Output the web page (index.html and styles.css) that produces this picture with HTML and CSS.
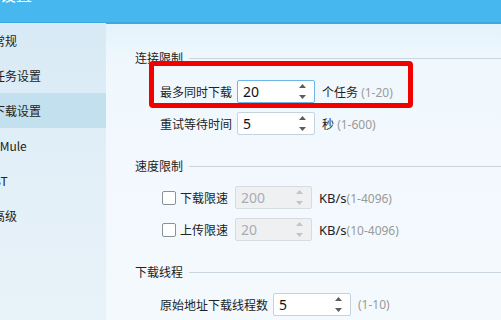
FILE: index.html
```html
<!DOCTYPE html>
<html lang="zh-CN">
<head>
<meta charset="utf-8">
<title>设置</title>
<link rel="stylesheet" href="styles.css">
</head>
<body>
<div class="window">
  <header class="titlebar"><span class="title">设置</span></header>
  <div class="body">
    <nav class="sidebar">
      <div class="nav-item">常规</div>
      <div class="nav-item">任务设置</div>
      <div class="nav-item active">下载设置</div>
      <div class="nav-item">eMule</div>
      <div class="nav-item">BT</div>
      <div class="nav-item">高级</div>
    </nav>
    <main class="content">
      <section class="group g1">
        <div class="group-title"><span>连接限制</span></div>
        <div class="rows">
          <div class="row">
            <span class="label">最多同时下载</span>
            <div class="spin focused"><span class="val">20</span>
              <svg class="arrows" width="7" height="15" viewBox="0 0 7 15"><path d="M3.5 0 L7 4 L0 4 Z M0 11 L7 11 L3.5 15 Z"/></svg>
            </div>
            <span class="unit">个任务 <span class="range">(1-20)</span></span>
          </div>
          <div class="row">
            <span class="label">重试等待时间</span>
            <div class="spin"><span class="val">5</span>
              <svg class="arrows" width="7" height="15" viewBox="0 0 7 15"><path d="M3.5 0 L7 4 L0 4 Z M0 11 L7 11 L3.5 15 Z"/></svg>
            </div>
            <span class="unit">秒 <span class="range">(1-600)</span></span>
          </div>
        </div>
      </section>
      <section class="group g2">
        <div class="group-title"><span>速度限制</span></div>
        <div class="rows">
          <div class="row">
            <span class="check"></span>
            <span class="label">下载限速</span>
            <div class="spin disabled"><span class="val">200</span>
              <svg class="arrows" width="7" height="15" viewBox="0 0 7 15"><path d="M3.5 0 L7 4 L0 4 Z M0 11 L7 11 L3.5 15 Z"/></svg>
            </div>
            <span class="unit">KB/s<span class="range">(1-4096)</span></span>
          </div>
          <div class="row">
            <span class="check"></span>
            <span class="label">上传限速</span>
            <div class="spin disabled"><span class="val">20</span>
              <svg class="arrows" width="7" height="15" viewBox="0 0 7 15"><path d="M3.5 0 L7 4 L0 4 Z M0 11 L7 11 L3.5 15 Z"/></svg>
            </div>
            <span class="unit">KB/s<span class="range">(10-4096)</span></span>
          </div>
        </div>
      </section>
      <section class="group g3">
        <div class="group-title"><span>下载线程</span></div>
        <div class="rows">
          <div class="row">
            <span class="label">原始地址下载线程数</span>
            <div class="spin"><span class="val">5</span>
              <svg class="arrows" width="7" height="15" viewBox="0 0 7 15"><path d="M3.5 0 L7 4 L0 4 Z M0 11 L7 11 L3.5 15 Z"/></svg>
            </div>
            <span class="unit"><span class="range">(1-10)</span></span>
          </div>
        </div>
      </section>
    </main>
  </div>
  <div class="highlight"></div>
</div>
</body>
</html>
```
FILE: styles.css
```css
* { box-sizing: border-box; }
html, body { margin: 0; padding: 0; }
body {
  width: 501px;
  height: 320px;
  overflow: hidden;
  font-family: "Noto Sans", "Noto Sans CJK SC", sans-serif;
  font-size: 12px;
  color: #222;
}
.window {
  position: relative;
  width: 501px;
  height: 320px;
  overflow: hidden;
  display: flex;
  flex-direction: column;
}
.titlebar {
  height: 24px;
  flex: none;
  background: #47b8ef;
  border-bottom: 2px solid #3ea9dd;
  overflow: hidden;
}
.title {
  display: block;
  margin-top: -14px;
  margin-left: 0;
  font-family: "Noto Sans CJK SC", sans-serif;
  font-size: 16px;
  line-height: 16px;
  color: #fff;
}
.body {
  flex: 1;
  display: flex;
  min-height: 0;
}
.sidebar {
  width: 106px;
  flex: none;
  background: linear-gradient(#d8eaf5, #e4f0f8 60%, #e8f2f9);
  padding-top: 0;
  margin-top: -1px;
  overflow: hidden;
}
.nav-item {
  height: 35px;
  line-height: 35px;
  margin-left: -7px;
  font-family: "Noto Sans CJK SC", sans-serif;
  font-size: 12px;
  color: #222;
}
.nav-item.active { background: #c3e0ee; }
.content {
  flex: 1;
  background: linear-gradient(#e4f3fc, #f1f8fd 45px, #f4f9fd);
  padding: 26px 0 0 29px;
}
.group-title {
  display: flex;
  align-items: center;
  gap: 6px;
  height: 16px;
  line-height: 16px;
  font-family: "Noto Sans CJK SC", sans-serif;
}
.group-title::after {
  content: "";
  flex: 1;
  height: 1px;
  background: #cbd5de;
}
.g2, .g3 { margin-top: 23px; }
.rows {
  display: flex;
  flex-direction: column;
  gap: 9px;
  padding-left: 25px;
}
.g1 .rows { margin-top: 14px; }
.g2 .rows { margin-top: 12px; }
.g3 .rows { margin-top: 13px; }
.row {
  display: flex;
  align-items: center;
  height: 23px;
}
.label {
  font-family: "Noto Sans CJK SC", sans-serif;
  margin-right: 5px;
  white-space: nowrap;
}
.g2 .label { margin-right: 7px; }
.check {
  width: 14px;
  height: 14px;
  margin-left: 2px;
  margin-right: 4px;
  border: 1px solid #8c9196;
  border-radius: 2px;
  background: #fff;
}
.spin {
  width: 78px;
  height: 23px;
  display: flex;
  align-items: center;
  padding-left: 5px;
  background: #fff;
  border: 1px solid #c6d2dc;
  border-radius: 2px;
  font-size: 14px;
  color: #111;
}
.spin.focused { border-color: #6cb6e8; }
.spin.disabled {
  background: #eef0f2;
  border-color: #d7dce1;
  color: #a9adb1;
  width: 77px;
}
.val { flex: 1; line-height: 21px; }
.arrows { margin-right: 8px; fill: #5a5d60; }
.disabled .arrows { fill: #c2c5c8; }
.unit {
  margin-left: 7px;
  font-size: 12px;
  color: #222;
  white-space: nowrap;
  font-family: "Noto Sans", "Noto Sans CJK SC", sans-serif;
}
.g2 .unit { font-size: 13px; }
.range { color: #9a9a9a; font-size: 12px; }
.highlight {
  position: absolute;
  left: 149px;
  top: 61px;
  width: 264px;
  height: 47px;
  border: 5px solid #f20000;
  border-radius: 4px;
}
```
